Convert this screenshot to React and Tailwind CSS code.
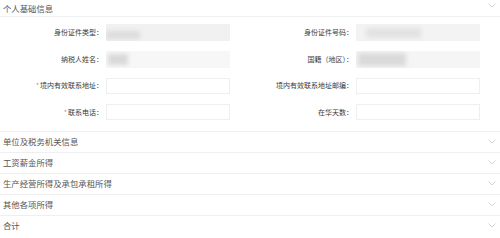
import React from "react";

const font = { fontFamily: '"Noto Sans CJK SC", "Noto Sans", sans-serif' };

function Chevron() {
  return (
    <svg width="8" height="5" viewBox="0 0 8 5" className="shrink-0">
      <path d="M0.5 0.5 L4 4 L7.5 0.5" fill="none" stroke="#cfcfcf" strokeWidth="0.9" />
    </svg>
  );
}

function Field({ label, star, children }) {
  return (
    <div className="flex items-center h-[17px]">
      <div className="w-[106px] pr-[3px] text-right text-[7px] leading-none text-[#3a3a3a] whitespace-nowrap">
        {star && <span className="text-[#9a9a9a] mr-[1px]">*</span>}
        {label}：
      </div>
      {children}
    </div>
  );
}

function Blurred({ fill, block }) {
  return (
    <div className={`relative w-[124px] h-[17px] overflow-hidden ${fill}`}>
      <div className={`absolute blur-[2px] ${block}`} />
    </div>
  );
}

function Empty() {
  return <div className="w-[124px] h-[16px] border border-[#efefef] bg-white" />;
}

export default function App() {
  const sections = ["单位及税务机关信息", "工资薪金所得", "生产经营所得及承包承租所得", "其他各项所得", "合计"];
  return (
    <div className="w-[500px] h-[238px] bg-white overflow-hidden" style={font}>
      <div className="h-[17px] flex items-center justify-between pl-[3px] pr-[4px] border-b border-[#f0f0f0]">
        <span className="text-[8.4px] leading-none text-[#555]">个人基础信息</span>
        <div className="-mt-[6px]"><Chevron /></div>
      </div>

      <div className="grid grid-cols-2 gap-y-[9.5px] pt-[7px] pb-[10px]">
        <Field label="身份证件类型">
          <Blurred fill="bg-[#f1f1f1]" block="left-[0px] top-[7px] w-[34px] h-[8px] bg-[#dcdcdc]" />
        </Field>
        <Field label="身份证件号码">
          <Blurred fill="bg-[#f3f3f3]" block="left-[10px] top-[4px] w-[55px] h-[10px] bg-[#e2e2e2]" />
        </Field>
        <Field label="纳税人姓名">
          <Blurred fill="bg-[#f7f7f7]" block="left-[2px] top-[3px] w-[20px] h-[11px] bg-[#d9d9d9]" />
        </Field>
        <Field label="国籍（地区）">
          <Blurred fill="bg-[#f5f5f5]" block="left-[2px] top-[2px] w-[48px] h-[13px] bg-[#dadada]" />
        </Field>
        <Field label="境内有效联系地址" star>
          <Empty />
        </Field>
        <Field label="境内有效联系地址邮编">
          <Empty />
        </Field>
        <Field label="联系电话" star>
          <Empty />
        </Field>
        <Field label="在华天数">
          <Empty />
        </Field>
      </div>

      {sections.map((s) => (
        <div
          key={s}
          className="h-[21px] flex items-center justify-between pl-[3px] pr-[4px] border-t border-[#efefef]"
        >
          <span className="text-[8.4px] leading-none text-[#555]">{s}</span>
          <Chevron />
        </div>
      ))}
    </div>
  );
}
